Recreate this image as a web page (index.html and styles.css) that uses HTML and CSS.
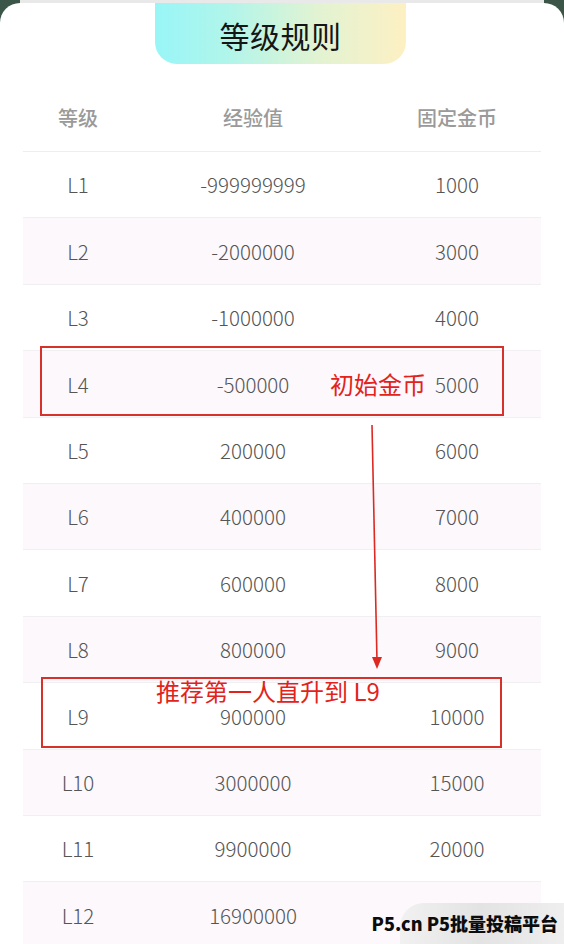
FILE: index.html
```html
<!DOCTYPE html>
<html lang="zh">
<head>
<meta charset="utf-8">
<title>等级规则</title>
<link rel="stylesheet" href="styles.css">
</head>
<body>
<div class="topbar"></div>
<div class="card">
  <div class="title-wrap"><div class="title">等级规则</div></div>
  <div class="table">
    <div class="row head"><div>等级</div><div>经验值</div><div>固定金币</div></div>
    <div class="row"><div>L1</div><div>-999999999</div><div>1000</div></div>
    <div class="row alt"><div>L2</div><div>-2000000</div><div>3000</div></div>
    <div class="row"><div>L3</div><div>-1000000</div><div>4000</div></div>
    <div class="row alt"><div>L4</div><div>-500000</div><div>5000</div></div>
    <div class="row"><div>L5</div><div>200000</div><div>6000</div></div>
    <div class="row alt"><div>L6</div><div>400000</div><div>7000</div></div>
    <div class="row"><div>L7</div><div>600000</div><div>8000</div></div>
    <div class="row alt"><div>L8</div><div>800000</div><div>9000</div></div>
    <div class="row"><div>L9</div><div>900000</div><div>10000</div></div>
    <div class="row alt"><div>L10</div><div>3000000</div><div>15000</div></div>
    <div class="row"><div>L11</div><div>9900000</div><div>20000</div></div>
    <div class="row alt"><div>L12</div><div>16900000</div><div></div></div>
  </div>

  <div class="mark box1"></div>
  <div class="note note1">初始金币</div>
  <svg class="arrow" width="20" height="260" viewBox="0 0 20 260">
    <line x1="4" y1="0" x2="9" y2="236" stroke="#dc2a22" stroke-width="1.6"/>
    <polygon points="4,232 14,232 9,244" fill="#dc2a22"/>
  </svg>
  <div class="mark box2"></div>
  <div class="note note2">推荐第一人直升到 L9</div>

  <div class="wm-bg"></div>
  <div class="wm">P5.cn P5批量投稿平台</div>
</div>
</body>
</html>
```
FILE: styles.css
```css
html, body {
  margin: 0;
  padding: 0;
}
body {
  width: 564px;
  height: 944px;
  overflow: hidden;
  background: #3b5649;
  font-family: "Noto Sans CJK SC", "Noto Sans", sans-serif;
}
.topbar {
  height: 3px;
  margin: 0 20px;
  background: #e9e9e9;
}
.card {
  position: relative;
  height: 941px;
  background: #fff;
  border-radius: 20px 20px 0 0;
  overflow: hidden;
}
.title-wrap {
  display: flex;
  justify-content: center;
  margin-top: -3px;
}
.title {
  width: 251px;
  height: 64px;
  margin-left: -3px;
  border-radius: 0 0 22px 22px;
  background: linear-gradient(90deg, #98f6f7 0%, #b2f5ea 30%, #e2f3d2 65%, #fdf0c3 100%);
  display: flex;
  align-items: center;
  justify-content: center;
  font-size: 30px;
  color: #151515;
  padding-top: 6px;
  box-sizing: border-box;
  letter-spacing: 0.5px;
}
.table {
  margin: 23px 23px 0 23px;
  width: 518px;
}
.row {
  display: grid;
  grid-template-columns: 110px 240px 168px;
  height: 66.4px;
  align-items: center;
  text-align: center;
  font-size: 20.5px;
  line-height: 1.2;
  color: #555555;
  font-weight: 300;
  border-bottom: 1px solid #f1eff1;
  box-sizing: border-box;
}
.row.alt {
  background: #fcf8fc;
}
.row.head {
  height: 65px;
  color: #9a9a9a;
  font-weight: 500;
  font-size: 20px;
  border-bottom: 1px solid #eeeeee;
  padding-bottom: 2px;
}
.mark {
  position: absolute;
  border: 2px solid #d6312b;
  box-sizing: border-box;
}
.box1 {
  left: 40px;
  top: 343px;
  width: 464px;
  height: 70px;
}
.box2 {
  left: 41px;
  top: 674px;
  width: 461px;
  height: 71px;
}
.note {
  position: absolute;
  color: #e2231c;
  font-size: 24px;
  line-height: 1;
  white-space: nowrap;
}
.note1 {
  left: 330px;
  top: 369px;
}
.note2 {
  left: 156px;
  top: 676px;
}
.arrow {
  position: absolute;
  left: 368px;
  top: 422px;
}
.wm-bg {
  position: absolute;
  left: 400px;
  top: 900px;
  width: 200px;
  height: 60px;
  border-radius: 24px 0 0 0;
  background: linear-gradient(90deg, rgba(238,238,238,0.7), rgba(226,226,226,0.95) 40%, rgba(242,242,242,0.9));
}
.wm {
  position: absolute;
  right: 6px;
  top: 910px;
  font-size: 18px;
  font-weight: 900;
  color: #0c0c0c;
  white-space: nowrap;
  line-height: 1.2;
}
```
